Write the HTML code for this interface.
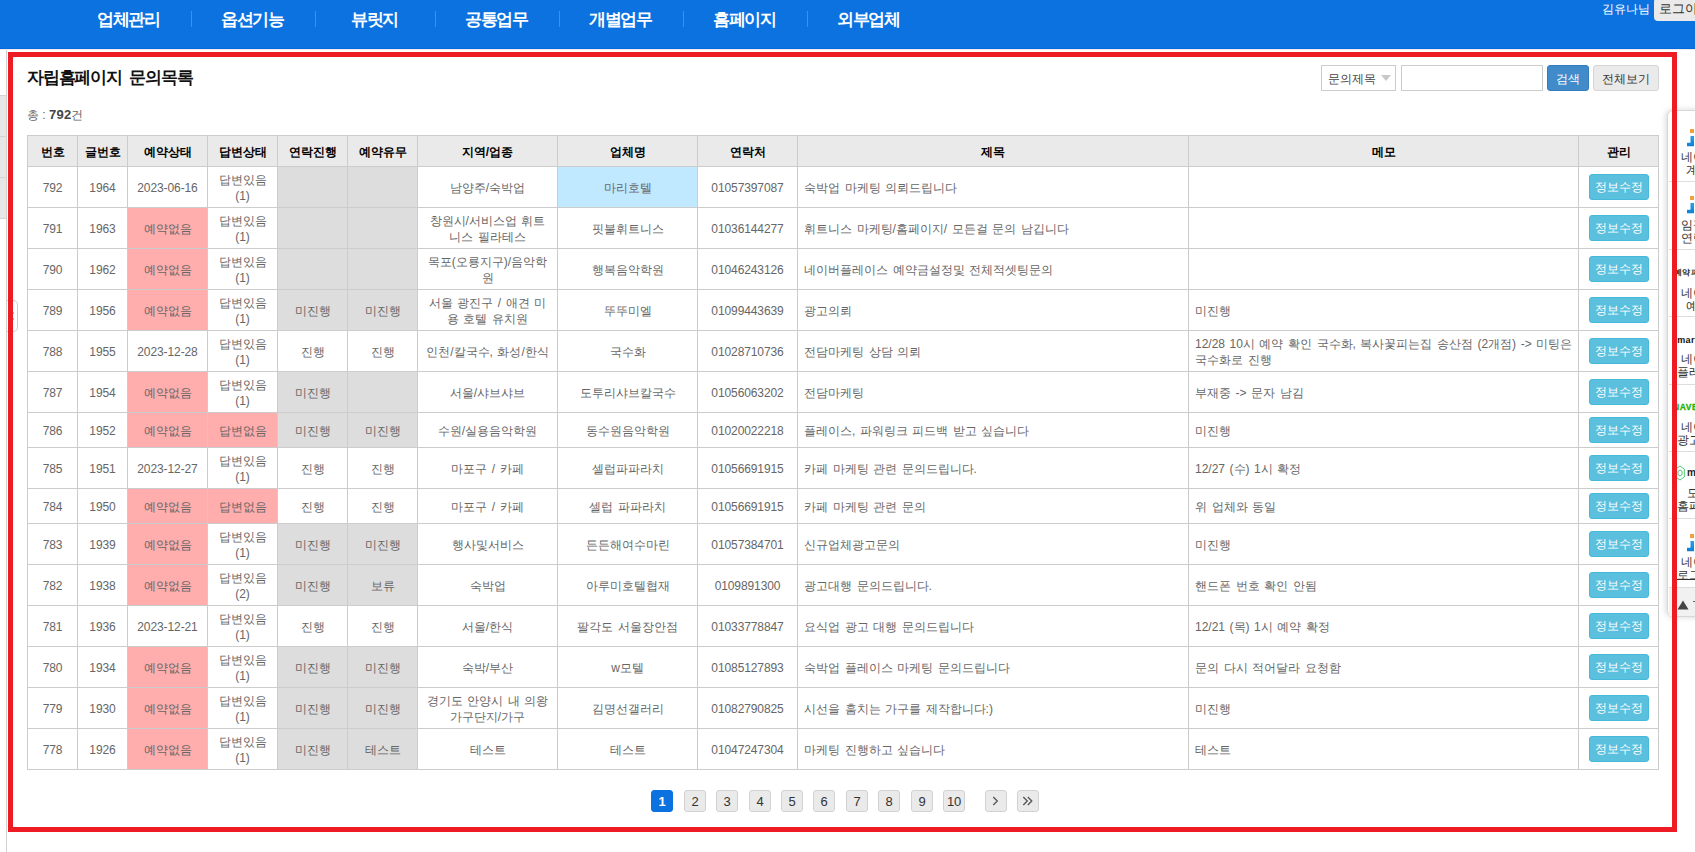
<!DOCTYPE html>
<html lang="ko"><head><meta charset="utf-8"><title>자립홈페이지 문의목록</title>
<style>
html,body{margin:0;padding:0}
html{width:1695px;height:852px;overflow:hidden}
#page{position:absolute;left:0;top:0;width:1695px;height:852px;overflow:hidden}
body{width:1695px;height:852px;overflow:hidden;position:relative;background:#fff;font-family:"Liberation Sans",sans-serif;font-size:13px;color:#666}
.abs{position:absolute}
#nav{position:absolute;left:0;top:0;width:1695px;height:49px;background:#0c72e0;border-bottom:1px solid #0067e0;box-sizing:border-box}
#nav .it{padding-right:3px;box-sizing:border-box;position:absolute;top:9px;height:22px;line-height:22px;text-align:center;color:#fff;font-weight:bold;font-size:17px;letter-spacing:-1.3px;white-space:nowrap}
#nav .sep{position:absolute;top:11px;width:1px;height:16px;background:#3f90e8}
#user{position:absolute;left:1602px;top:1px;font-size:12px;line-height:17px;color:#fff;white-space:nowrap}
#logout{position:absolute;left:1654px;top:-2px;width:60px;height:23px;background:#eaeaea;border-radius:4px;color:#333;font-size:13px;line-height:22px;padding-left:5px;box-sizing:border-box;white-space:nowrap;overflow:hidden}
#title{position:absolute;left:27px;top:66px;font-size:17px;letter-spacing:-1.2px;word-spacing:4px;line-height:24px;font-weight:bold;color:#111;white-space:nowrap}
#total{position:absolute;left:27px;top:107px;font-size:12px;line-height:16px;color:#666;white-space:nowrap}
#total b{color:#444;font-size:13px;letter-spacing:0.2px}
table.list{position:absolute;left:27px;top:135px;width:1631px;border-collapse:collapse;table-layout:fixed}
table.list th,table.list td{border:1px solid #ccc;padding:1px 0 0;text-align:center;vertical-align:middle;line-height:16px;font-size:12px;word-spacing:1.2px;overflow:hidden;box-sizing:border-box}
table.list th{height:31px;background:#eaeaea;color:#000;font-weight:bold;padding:2px 0 0}
table.list td.n{letter-spacing:-0.1px}
table.list td.l{text-align:left;padding-left:6px;padding-right:2px}
table.list td.c{padding:0 0 0 10px;text-align:left}
table.list td.p{background:#ffadad}
table.list td.g{background:#ddd}
table.list td.b{background:#c0e8ff}
.btn{text-align:center;display:inline-block;width:60px;height:26px;line-height:24px;box-sizing:border-box;background:#5bc0de;border:1px solid #46b8da;border-radius:3px;color:#fff;font-size:12px;vertical-align:middle;white-space:nowrap}
.pb{position:absolute;top:790px;width:22px;height:22px;box-sizing:border-box;border:1px solid #d2d2d2;border-radius:3px;background:#eaeaea;color:#333;font-size:13px;line-height:22px;text-align:center;letter-spacing:-0.3px}
.pb.on{background:#0c72e0;border-color:#0c72e0;color:#fff;font-weight:bold}
.pb svg{display:block}
#side{position:absolute;left:1667px;top:110px;width:40px;height:507px;box-sizing:border-box;border:1px solid #d8d8d8;border-radius:6px;background:#fff;box-shadow:-1px 0 6px rgba(0,0,0,0.16)}
.st{font-size:12px;line-height:16px;color:#333;white-space:nowrap}
</style></head>
<body>
<div id="page">
<div id="nav">
<div class="it" style="left:68px;width:124px">업체관리</div><div class="sep" style="left:191px"></div>
<div class="it" style="left:192px;width:124px">옵션기능</div><div class="sep" style="left:315px"></div>
<div class="it" style="left:316px;width:120px">뷰릿지</div><div class="sep" style="left:435px"></div>
<div class="it" style="left:436px;width:124px">공통업무</div><div class="sep" style="left:559px"></div>
<div class="it" style="left:560px;width:124px">개별업무</div><div class="sep" style="left:683px"></div>
<div class="it" style="left:684px;width:124px">홈페이지</div><div class="sep" style="left:807px"></div>
<div class="it" style="left:808px;width:124px">외부업체</div>
<div id="user">김유나님</div>
<div id="logout">로그아웃</div>
</div>
<div id="navline" class="abs" style="left:0;top:49px;width:1695px;height:1px;background:#efece8"></div>
<div class="abs" style="left:0;top:95px;width:6px;height:124px;background:#e6e6e6;border-top:1px solid #d4d4d4;border-bottom:1px solid #d4d4d4;box-sizing:border-box"></div>
<div class="abs" style="left:0;top:136px;width:6px;height:1px;background:#d4d4d4"></div>
<div class="abs" style="left:0;top:177px;width:6px;height:1px;background:#d4d4d4"></div>
<div class="abs" style="left:6px;top:50px;width:1px;height:802px;background:#d0d0d0"></div>
<div class="abs" style="left:7px;top:300px;width:11px;height:32px;border:1px solid #ccc;border-left:none;border-radius:0 5px 5px 0;box-sizing:border-box;background:#fff"></div><div class="abs" style="left:13px;top:312px;width:1px;height:2px;background:#9cc"></div><div class="abs" style="left:13px;top:318px;width:1px;height:2px;background:#9cc"></div>
<div id="title">자립홈페이지 문의목록</div>
<div id="total">총 : <b>792</b>건</div>
<div class="abs" style="left:1321px;top:65px;width:75px;height:26px;border:1px solid #ccc;box-sizing:border-box;background:#fff;font-size:12px;line-height:26px;color:#444;padding-left:6px;white-space:nowrap">문의제목<svg style="position:absolute;left:59px;top:9px" width="10" height="8" viewBox="0 0 10 8"><path d="M0 0H10L5 6Z" fill="#c8c8c8"/></svg></div>
<div class="abs" style="left:1401px;top:65px;width:142px;height:26px;border:1px solid #ccc;box-sizing:border-box;background:#fff"></div>
<div class="abs" style="left:1547px;top:65px;width:42px;height:26px;border:1px solid #357ebd;border-radius:3px;box-sizing:border-box;background:#428bca;color:#fff;font-size:12px;line-height:26px;text-align:center;white-space:nowrap">검색</div>
<div class="abs" style="left:1593px;top:65px;width:66px;height:26px;border:1px solid #d6d6d6;border-radius:3px;box-sizing:border-box;background:#eaeaea;color:#333;font-size:12px;line-height:26px;text-align:center;white-space:nowrap">전체보기</div>
<table class="list"><colgroup><col style="width:50px"><col style="width:50px"><col style="width:80px"><col style="width:70px"><col style="width:70px"><col style="width:70px"><col style="width:140px"><col style="width:140px"><col style="width:100px"><col style="width:391px"><col style="width:390px"><col style="width:80px"></colgroup>
<thead><tr><th>번호</th><th>글번호</th><th>예약상태</th><th>답변상태</th><th>연락진행</th><th>예약유무</th><th>지역/업종</th><th>업체명</th><th>연락처</th><th>제목</th><th>메모</th><th>관리</th></tr></thead>
<tbody>
<tr style="height:41px"><td class="n">792</td><td class="n">1964</td><td class="n">2023-06-16</td><td>답변있음<br>(1)</td><td class="g"></td><td class="g"></td><td>남양주/숙박업</td><td class="b">마리호텔</td><td class="n">01057397087</td><td class="l">숙박업 마케팅 의뢰드립니다</td><td class="l"></td><td class="c"><span class="btn">정보수정</span></td></tr>
<tr style="height:41px"><td class="n">791</td><td class="n">1963</td><td class="p">예약없음</td><td>답변있음<br>(1)</td><td class="g"></td><td class="g"></td><td>창원시/서비스업 휘트<br>니스 필라테스</td><td>핏불휘트니스</td><td class="n">01036144277</td><td class="l">휘트니스 마케팅/홈페이지/ 모든걸 문의 남깁니다</td><td class="l"></td><td class="c"><span class="btn">정보수정</span></td></tr>
<tr style="height:41px"><td class="n">790</td><td class="n">1962</td><td class="p">예약없음</td><td>답변있음<br>(1)</td><td class="g"></td><td class="g"></td><td>목포(오룡지구)/음악학<br>원</td><td>행복음악학원</td><td class="n">01046243126</td><td class="l">네이버플레이스 예약금설정및 전체적셋팅문의</td><td class="l"></td><td class="c"><span class="btn">정보수정</span></td></tr>
<tr style="height:41px"><td class="n">789</td><td class="n">1956</td><td class="p">예약없음</td><td>답변있음<br>(1)</td><td class="g">미진행</td><td class="g">미진행</td><td>서울 광진구 / 애견 미<br>용 호텔 유치원</td><td>뚜뚜미엘</td><td class="n">01099443639</td><td class="l">광고의뢰</td><td class="l">미진행</td><td class="c"><span class="btn">정보수정</span></td></tr>
<tr style="height:41px"><td class="n">788</td><td class="n">1955</td><td class="n">2023-12-28</td><td>답변있음<br>(1)</td><td>진행</td><td>진행</td><td>인천/칼국수, 화성/한식</td><td>국수화</td><td class="n">01028710736</td><td class="l">전담마케팅 상담 의뢰</td><td class="l">12/28 10시 예약 확인 국수화, 복사꽃피는집 송산점 (2개점) -&gt; 미팅은<br>국수화로 진행</td><td class="c"><span class="btn">정보수정</span></td></tr>
<tr style="height:41px"><td class="n">787</td><td class="n">1954</td><td class="p">예약없음</td><td>답변있음<br>(1)</td><td class="g">미진행</td><td class="g"></td><td>서울/샤브샤브</td><td>도투리샤브칼국수</td><td class="n">01056063202</td><td class="l">전담마케팅</td><td class="l">부재중 -&gt; 문자 남김</td><td class="c"><span class="btn">정보수정</span></td></tr>
<tr style="height:35px"><td class="n">786</td><td class="n">1952</td><td class="p">예약없음</td><td class="p">답변없음</td><td class="g">미진행</td><td class="g">미진행</td><td>수원/실용음악학원</td><td>동수원음악학원</td><td class="n">01020022218</td><td class="l">플레이스, 파워링크 피드백 받고 싶습니다</td><td class="l">미진행</td><td class="c"><span class="btn">정보수정</span></td></tr>
<tr style="height:41px"><td class="n">785</td><td class="n">1951</td><td class="n">2023-12-27</td><td>답변있음<br>(1)</td><td>진행</td><td>진행</td><td>마포구 / 카페</td><td>셀럽파파라치</td><td class="n">01056691915</td><td class="l">카페 마케팅 관련 문의드립니다.</td><td class="l">12/27 (수) 1시 확정</td><td class="c"><span class="btn">정보수정</span></td></tr>
<tr style="height:35px"><td class="n">784</td><td class="n">1950</td><td class="p">예약없음</td><td class="p">답변없음</td><td>진행</td><td>진행</td><td>마포구 / 카페</td><td>셀럽 파파라치</td><td class="n">01056691915</td><td class="l">카페 마케팅 관련 문의</td><td class="l">위 업체와 동일</td><td class="c"><span class="btn">정보수정</span></td></tr>
<tr style="height:41px"><td class="n">783</td><td class="n">1939</td><td class="p">예약없음</td><td>답변있음<br>(1)</td><td class="g">미진행</td><td class="g">미진행</td><td>행사및서비스</td><td>든든해여수마린</td><td class="n">01057384701</td><td class="l">신규업체광고문의</td><td class="l">미진행</td><td class="c"><span class="btn">정보수정</span></td></tr>
<tr style="height:41px"><td class="n">782</td><td class="n">1938</td><td class="p">예약없음</td><td>답변있음<br>(2)</td><td class="g">미진행</td><td class="g">보류</td><td>숙박업</td><td>아루미호텔협재</td><td class="n">0109891300</td><td class="l">광고대행 문의드립니다.</td><td class="l">핸드폰 번호 확인 안됨</td><td class="c"><span class="btn">정보수정</span></td></tr>
<tr style="height:41px"><td class="n">781</td><td class="n">1936</td><td class="n">2023-12-21</td><td>답변있음<br>(1)</td><td>진행</td><td>진행</td><td>서울/한식</td><td>팔각도 서울장안점</td><td class="n">01033778847</td><td class="l">요식업 광고 대행 문의드립니다</td><td class="l">12/21 (목) 1시 예약 확정</td><td class="c"><span class="btn">정보수정</span></td></tr>
<tr style="height:41px"><td class="n">780</td><td class="n">1934</td><td class="p">예약없음</td><td>답변있음<br>(1)</td><td class="g">미진행</td><td class="g">미진행</td><td>숙박/부산</td><td>w모텔</td><td class="n">01085127893</td><td class="l">숙박업 플레이스 마케팅 문의드립니다</td><td class="l">문의 다시 적어달라 요청함</td><td class="c"><span class="btn">정보수정</span></td></tr>
<tr style="height:41px"><td class="n">779</td><td class="n">1930</td><td class="p">예약없음</td><td>답변있음<br>(1)</td><td class="g">미진행</td><td class="g">미진행</td><td>경기도 안양시 내 의왕<br>가구단지/가구</td><td>김명선갤러리</td><td class="n">01082790825</td><td class="l">시선을 훔치는 가구를 제작합니다:)</td><td class="l">미진행</td><td class="c"><span class="btn">정보수정</span></td></tr>
<tr style="height:41px"><td class="n">778</td><td class="n">1926</td><td class="p">예약없음</td><td>답변있음<br>(1)</td><td class="g">미진행</td><td class="g">테스트</td><td>테스트</td><td>테스트</td><td class="n">01047247304</td><td class="l">마케팅 진행하고 싶습니다</td><td class="l">테스트</td><td class="c"><span class="btn">정보수정</span></td></tr>
</tbody></table>
<div class="pb on" style="left:651px">1</div>
<div class="pb" style="left:684px">2</div>
<div class="pb" style="left:716px">3</div>
<div class="pb" style="left:749px">4</div>
<div class="pb" style="left:781px">5</div>
<div class="pb" style="left:813px">6</div>
<div class="pb" style="left:846px">7</div>
<div class="pb" style="left:878px">8</div>
<div class="pb" style="left:911px">9</div>
<div class="pb" style="left:943px">10</div>
<div class="pb" style="left:985px"><svg width="20" height="20" viewBox="0 0 20 20"><path d="M7.3 6L11.3 10L7.3 14" fill="none" stroke="#555" stroke-width="1.3"/></svg></div>
<div class="pb" style="left:1017px"><svg width="20" height="20" viewBox="0 0 20 20"><path d="M5.3 6L9.3 10L5.3 14M9.8 6L13.8 10L9.8 14" fill="none" stroke="#555" stroke-width="1.3"/></svg></div>
<div id="side"></div>
<div class="abs" style="left:1669px;top:181px;width:30px;height:1px;background:#ddd"></div>
<div class="abs" style="left:1669px;top:249px;width:30px;height:1px;background:#ddd"></div>
<div class="abs" style="left:1669px;top:316px;width:30px;height:1px;background:#ddd"></div>
<div class="abs" style="left:1669px;top:384px;width:30px;height:1px;background:#ddd"></div>
<div class="abs" style="left:1669px;top:451px;width:30px;height:1px;background:#ddd"></div>
<div class="abs" style="left:1669px;top:518px;width:30px;height:1px;background:#ddd"></div>
<div class="abs" style="left:1669px;top:587px;width:30px;height:29px;background:#f1f1f1;border-top:1px solid #ddd;box-sizing:border-box"></div>
<div class="abs" style="left:1690px;top:129px;width:4px;height:4px;background:#f0a040"></div><svg class="abs" style="left:1686px;top:136px" width="10" height="11" viewBox="0 0 10 11"><defs><linearGradient id="g129" x1="0" y1="0" x2="0" y2="1"><stop offset="0" stop-color="#2b9fe8"/><stop offset="1" stop-color="#0d7fd6"/></linearGradient></defs><path d="M4.5 0H8V10.3H1V6.8H4.5Z" fill="url(#g129)"/></svg>
<div class="abs st" style="left:1681px;top:149px;">네이버</div>
<div class="abs st" style="left:1686px;top:162px;">계정</div>
<div class="abs" style="left:1690px;top:196px;width:4px;height:4px;background:#f0a040"></div><svg class="abs" style="left:1686px;top:203px" width="10" height="11" viewBox="0 0 10 11"><defs><linearGradient id="g196" x1="0" y1="0" x2="0" y2="1"><stop offset="0" stop-color="#2b9fe8"/><stop offset="1" stop-color="#0d7fd6"/></linearGradient></defs><path d="M4.5 0H8V10.3H1V6.8H4.5Z" fill="url(#g196)"/></svg>
<div class="abs st" style="left:1681px;top:217px;">임직원</div>
<div class="abs st" style="left:1681px;top:230px;">연락</div>
<div class="abs" style="left:1677px;top:255px;width:18px;height:30px;overflow:hidden"><div class="abs st" style="left:-3px;top:10px;font-size:8px;font-weight:bold;color:#222;letter-spacing:-0.5px">예약 파트너</div></div>
<div class="abs st" style="left:1681px;top:285px;">네이버</div>
<div class="abs st" style="left:1686px;top:298px;">예약</div>
<div class="abs" style="left:1677px;top:322px;width:18px;height:30px;overflow:hidden"><div class="abs st" style="left:-5px;top:10px;font-size:9px;font-weight:bold;color:#111;letter-spacing:0.3px">smartplace</div></div>
<div class="abs st" style="left:1681px;top:351px;">네이버</div>
<div class="abs st" style="left:1677px;top:364px;">플레이스</div>
<div class="abs" style="left:1677px;top:389px;width:18px;height:30px;overflow:hidden"><div class="abs st" style="left:-4px;top:10px;font-size:8.5px;font-weight:bold;color:#22b40a;letter-spacing:0.6px;-webkit-text-stroke:0.3px #22b40a">NAVER</div></div>
<div class="abs st" style="left:1681px;top:419px;">네이버</div>
<div class="abs st" style="left:1677px;top:432px;">광고</div>
<svg class="abs" style="left:1675px;top:465px" width="10" height="16" viewBox="0 0 10 16"><path d="M5 1L9.3 4V12L5 15L0.7 12V4Z M5 5L7 6.3V9.7L5 11L3 9.7V6.3Z" fill="none" stroke="#35c56a" stroke-width="0.9"/></svg>
<div class="abs st" style="left:1687px;top:465px;font-size:10px;font-weight:bold;color:#222">modoo</div>
<div class="abs st" style="left:1687px;top:485px;">모두</div>
<div class="abs st" style="left:1677px;top:498px;">홈페이지</div>
<div class="abs" style="left:1690px;top:534px;width:4px;height:4px;background:#f0a040"></div><svg class="abs" style="left:1686px;top:541px" width="10" height="11" viewBox="0 0 10 11"><defs><linearGradient id="g534" x1="0" y1="0" x2="0" y2="1"><stop offset="0" stop-color="#2b9fe8"/><stop offset="1" stop-color="#0d7fd6"/></linearGradient></defs><path d="M4.5 0H8V10.3H1V6.8H4.5Z" fill="url(#g534)"/></svg>
<div class="abs st" style="left:1681px;top:554px;">네이버</div>
<div class="abs st" style="left:1677px;top:567px;text-decoration:underline;text-decoration-thickness:1px;text-underline-offset:0px">로그인</div>
<svg class="abs" style="left:1677px;top:600px" width="12" height="10" viewBox="0 0 12 10"><path d="M6 0.5L11.5 9.5H0.5Z" fill="#444"/></svg>
<div class="abs" style="left:1693px;top:601px;width:3px;height:1px;background:#666"></div>
<div class="abs" style="left:8px;top:52px;width:1669px;height:780px;border:5px solid #ed1c24;box-sizing:border-box"></div>
</div>
</body></html>
